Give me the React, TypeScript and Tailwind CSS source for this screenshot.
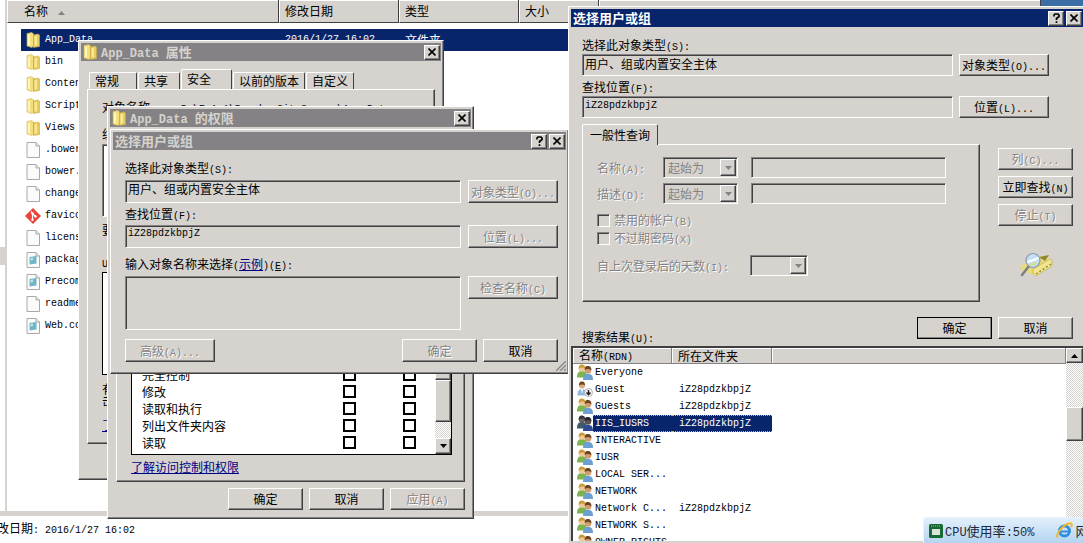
import { ReactNode } from 'react';

import { clsx } from 'clsx';

const raised =
	'bg-[#d6d3ce] border border-t-white border-l-white border-r-[#404040] border-b-[#404040] shadow-[inset_-1px_-1px_0_#848284]';
const sunken =
	'bg-[#d6d3ce] border border-t-[#848284] border-l-[#848284] border-r-white border-b-white shadow-[inset_1px_1px_0_#404040]';
const mono = "font-['Liberation_Mono','Noto_Sans_CJK_SC',monospace]";
const disabledText = 'text-[#848284] [text-shadow:1px_1px_0_#fff]';

// Latin runs are half as wide as the Chinese characters, so they get the mono face
function T({ children, large }: { children: string; large?: boolean }) {
	return (
		<>
			{children.split(/([\x20-\x7e]+)/).map((part, index) =>
				index % 2 ? (
					<span key={index} className={clsx(mono, 'whitespace-pre', large ? 'text-xs/none' : 'text-[10px]/none')}>
						{part}
					</span>
				) : (
					part
				)
			)}
		</>
	);
}

function FolderIcon() {
	return (
		<svg width="14" height="16" viewBox="0 0 14 16" className="shrink-0">
			<path d="M1 1.500 6 .5 7.500 2v12L6 15.500 1 14Z" fill="#f3df7e" stroke="#d9bd55" strokeWidth=".6" />
			<path d="M2 3 4 2.500v11L2 13Z" fill="#fdf6bd" />
			<path d="M7.500 3 12 2l1.500 1v11.500L7.500 15.500Z" fill="#e8cb60" stroke="#cba944" strokeWidth=".6" />
			<path d="M8.500 4.500 11 3.500V13l-2.500 1Z" fill="#f8e795" />
			<path d="M7 2h.8v13H7Z" fill="#d0ac48" />
		</svg>
	);
}

function PageIcon({ config }: { config?: boolean }) {
	return (
		<svg width="14" height="16" viewBox="0 0 14 16" className="shrink-0">
			<path d="M1 .5h9L13.500 4v11.500H1Z" fill="#fbfbfb" stroke="#a9a9a9" />
			<path d="M10 .5V4h3.500" fill="#e6e6e6" stroke="#a9a9a9" />
			{config && (
				<>
					<path d="M3.500 5 10.500 4v7.500l-7 1Z" fill="#6fb6c6" />
					<path d="M4.500 6 7 5.500V8l-2.500.5Z" fill="#c0e4ea" />
				</>
			)}
		</svg>
	);
}

function GitIcon() {
	return (
		<svg width="16" height="16" viewBox="0 0 16 16" className="-mr-px -ml-px shrink-0">
			<path d="m8 0 8 8-8 8-8-8Z" fill="#e8443a" />
			<path d="M6 3.500 7.500 5v7M7.500 5.500 10.500 8.500" stroke="#fff" strokeWidth="1.200" fill="none" />
			<circle cx="7.500" cy="5.500" r="1.200" fill="#fff" />
			<circle cx="10.500" cy="8.500" r="1.200" fill="#fff" />
			<circle cx="7.500" cy="11.700" r="1.200" fill="#fff" />
		</svg>
	);
}

function GroupIcon({ selected }: { selected?: boolean }) {
	return (
		<svg width="16" height="16" viewBox="0 0 16 16" className="shrink-0">
			<path d="M0 13.500C0 9 1.500 7 5 7s5 2 5 6.500Z" fill={selected ? '#3c5a6b' : '#7cb450'} />
			<circle cx="5" cy="4.500" r="3.200" fill={selected ? '#66605f' : '#f0c894'} />
			<path d="M1.500 5C1.500 1 3.500 0 5.500.5 8 1 8.500 3 8.500 4.500 6.500 3 4 3 1.500 5Z" fill={selected ? '#34343f' : '#c89b3c'} />
			<path d="M6 16c0-4.500 1.500-6 5-6s5 1.500 5 6Z" fill={selected ? '#2c4a94' : '#6c9fd2'} />
			<circle cx="11" cy="6.500" r="3.200" fill={selected ? '#5b514e' : '#d09c70'} />
			<path d="M7.700 6c0-3.500 1.500-4 3.300-4s3.500 1 3.500 4.500c-2-1.500-4.500-2-6.800-.5Z" fill={selected ? '#24242f' : '#6b4423'} />
		</svg>
	);
}

function GuestIcon() {
	return (
		<svg width="16" height="16" viewBox="0 0 16 16" className="shrink-0">
			<path d="M.5 14.500C.5 10 2 8 5 8s4.500 2 4.500 6.500Z" fill="#8fb9dc" />
			<path d="m4 8 1 5 1-5Z" fill="#fff" />
			<circle cx="5" cy="4.500" r="3" fill="#dcae7c" />
			<path d="M2 4.500C2 1 3.500.5 5 .5S8 1 8 4.500C6.500 3 4 3 2 4.500Z" fill="#6b4a22" />
			<circle cx="11.500" cy="11.500" r="4" fill="#f4f4f4" stroke="#a5a5a5" strokeWidth=".8" />
			<path d="M11.500 9v4.500M9.500 11.500l2 2.300 2-2.300" stroke="#222" strokeWidth="1.400" fill="none" />
		</svg>
	);
}

function SearchPicture() {
	return (
		<svg width="34" height="26" viewBox="0 0 34 26">
			<path d="M1 14 22 4l8 1-12 18L4 20Z" fill="#e9db7c" />
			<path d="M14 17 31 7l2 1v6L17 24l-3-2Z" fill="#f1e58f" stroke="#b8a63e" strokeWidth=".6" />
			<path d="m17 22 15-10" stroke="#9b8a2c" strokeWidth="1.500" strokeDasharray="2 2" />
			<path d="m20 5 10-2-4 6Z" fill="#8f8630" />
			<path d="M10 14 3 23" stroke="#77808a" strokeWidth="2.500" strokeLinecap="round" />
			<circle cx="14" cy="8.500" r="7" fill="#c3e0f6" stroke="#8b9aa8" strokeWidth="1.200" />
			<path d="M8.500 10.500C12 7.500 16 9 19.500 5.500" stroke="#fff" strokeWidth="2" fill="none" />
			<path d="M10 13c3-3 6-2 9-3-1 3-5 5-9 3Z" fill="#cfe08f" />
		</svg>
	);
}

function CaptionButton({ kind }: { kind: 'close' | 'help' }) {
	return (
		<button aria-label={kind} className={clsx(raised, 'flex h-[15px] w-4 items-center justify-center')}>
			{kind === 'close' ? (
				<svg width="8" height="8" viewBox="0 0 8 8" stroke="#000" strokeWidth="1.600">
					<path d="m.5.5 7 7M7.500.5l-7 7" />
				</svg>
			) : (
				<svg width="7" height="10" viewBox="0 0 7 10" stroke="#000" strokeWidth="1.700" fill="none">
					<path d="M1 3.500V2l1-1h3l1 1v1.500L3.500 5.500V7M3.500 8.200V10" />
				</svg>
			)}
		</button>
	);
}

type TitleBarProps = {
	title: string;
	active?: boolean;
	icon?: boolean;
	help?: boolean;
};

function TitleBar({ title, active, icon, help }: TitleBarProps) {
	return (
		<header
			className={clsx(
				'flex h-[18px] shrink-0 items-center pr-px pl-[2px] text-[13px] leading-4 font-bold',
				active ? 'bg-[#08246b] text-white' : 'bg-[#848284] text-[#d6d3ce]'
			)}
		>
			{icon && (
				<span className="mr-1">
					<FolderIcon />
				</span>
			)}
			<h2 className="flex-1 whitespace-nowrap">
				<T large>{title}</T>
			</h2>
			<div className="flex gap-[2px]">
				{help && <CaptionButton kind="help" />}
				<CaptionButton kind="close" />
			</div>
		</header>
	);
}

type ButtonProps = {
	children: string;
	disabled?: boolean;
	primary?: boolean;
	className?: string;
};

function Button({ children, disabled, primary, className = 'h-[22px] w-[75px]' }: ButtonProps) {
	return (
		<button
			disabled={disabled}
			className={clsx(
				raised,
				className,
				'shrink-0 leading-4 whitespace-nowrap',
				disabled && disabledText,
				primary && 'outline-1 -outline-offset-1 outline-black'
			)}
		>
			<T>{children}</T>
		</button>
	);
}

function Arrow({ up, muted }: { up?: boolean; muted?: boolean }) {
	return (
		<svg width="7" height="4" viewBox="0 0 7 4" fill={muted ? '#848284' : '#000'}>
			<path d={up ? 'M0 4h7L3.500 0Z' : 'M0 0h7L3.500 4Z'} />
		</svg>
	);
}

function Select({ id, value, className }: { id: string; value: string; className: string }) {
	return (
		<div className={clsx('relative', className)}>
			<select
				id={id}
				disabled
				className={clsx(sunken, 'block h-[21px] w-full appearance-none pl-1 leading-4 text-[#848284] opacity-100')}
			>
				<option>{value}</option>
			</select>
			<span className={clsx(raised, 'pointer-events-none absolute top-[2px] right-[2px] flex h-[17px] w-4 items-center justify-center')}>
				<Arrow muted />
			</span>
		</div>
	);
}

function Tab({ children, active }: { children: string; active?: boolean }) {
	return (
		<button
			role="tab"
			aria-selected={!!active}
			className={clsx(
				'rounded-t-[2px] border border-b-0 border-t-white border-l-white border-r-[#404040] bg-[#d6d3ce] pl-[5px] whitespace-nowrap',
				active ? 'h-5 pr-5 pb-[2px]' : 'h-[17px] pr-[5px]'
			)}
		>
			{children}
		</button>
	);
}

function Checker({ className }: { className?: string }) {
	return (
		<div className={clsx('bg-[#eae8e5] bg-[repeating-conic-gradient(#d6d3ce_0_25%,#fff_0_50%)] bg-[length:2px_2px]', className)} />
	);
}

const files = [
	{ name: 'App_Data', icon: <FolderIcon /> },
	{ name: 'bin', icon: <FolderIcon /> },
	{ name: 'Content', icon: <FolderIcon /> },
	{ name: 'Scripts', icon: <FolderIcon /> },
	{ name: 'Views', icon: <FolderIcon /> },
	{ name: '.bowerrc', icon: <PageIcon /> },
	{ name: 'bower.json', icon: <PageIcon /> },
	{ name: 'changelog.md', icon: <PageIcon /> },
	{ name: 'favicon.ico', icon: <GitIcon /> },
	{ name: 'license.txt', icon: <PageIcon /> },
	{ name: 'packages.config', icon: <PageIcon config /> },
	{ name: 'PrecompiledApp.config', icon: <PageIcon config /> },
	{ name: 'readme.md', icon: <PageIcon /> },
	{ name: 'Web.config', icon: <PageIcon config /> },
];

function Explorer() {
	const th = 'border-r border-r-[#404040] border-b border-b-[#404040] border-l border-l-white py-0 pr-0 text-left font-normal';

	return (
		<main className="mr-[42px] flex h-full flex-col bg-white">
			<div className="flex min-h-0 flex-1">
				<div className="flex w-[7px] shrink-0 items-center border-r-2 border-[#d6d3ce]">
					<div className="h-[18px] w-full bg-[#d6d3ce]" />
				</div>
				<div className="min-w-0 flex-1 overflow-hidden">
					<table className="w-full table-fixed border-separate border-spacing-0">
						<thead>
							<tr className="h-[23px] bg-[#d6d3ce] shadow-[inset_0_1px_0_#fff]">
								<th className={clsx(th, 'w-[272px] pl-4')}>
									名称
									<svg width="7" height="4" viewBox="0 0 7 4" className="ml-[10px] inline align-middle" fill="#848284">
										<path d="M0 4h7L3.500 0Z" />
									</svg>
								</th>
								<th className={clsx(th, 'w-[120px] pl-[5px]')}>修改日期</th>
								<th className={clsx(th, 'w-[120px] pl-[5px]')}>类型</th>
								<th className={clsx(th, 'w-[80px] pl-[5px]')}>大小</th>
								<th className={th} />
							</tr>
						</thead>
						<tbody className="before:block before:h-[6px]">
							{files.map(({ name, icon }, index) => {
								const row = clsx('flex h-[22px] items-center whitespace-nowrap', index === 0 && 'bg-[#08246b] text-white');
								return (
									<tr key={name}>
										<td className="p-0 pl-[14px]">
											<div className={clsx(row, 'gap-[5px] pl-[5px]')}>
												{icon}
												<T>{name}</T>
											</div>
										</td>
										<td className="p-0">
											<div className={clsx(row, 'pl-[6px]')}>
												<T>2016/1/27 16:02</T>
											</div>
										</td>
										<td className="p-0">
											<div className={clsx(row, 'pl-[6px]')}>{index < 5 ? '文件夹' : '文件'}</div>
										</td>
										<td className="p-0">
											<div className={row} />
										</td>
									</tr>
								);
							})}
						</tbody>
					</table>
				</div>
			</div>
			<div className="h-[5px] shrink-0 bg-[#d6d3ce]" />
			<footer className="-ml-[3px] flex h-[27px] shrink-0 items-center pb-1">
				<p className="whitespace-nowrap">
					<T>改日期: 2016/1/27 16:02</T>
				</p>
			</footer>
		</main>
	);
}

function PropertiesWindow() {
	return (
		<section className={clsx(raised, 'absolute top-10 left-[78px] flex h-[440px] w-[366px] flex-col p-[2px]')}>
			<TitleBar title="App_Data 属性" icon />
			<div className="flex flex-1 flex-col px-[6px] pt-2 pb-[33px]">
				<div role="tablist" className="flex items-end gap-px pl-[2px]">
					<Tab>常规&emsp;</Tab>
					<Tab>共享&ensp;</Tab>
					<Tab active>安全</Tab>
					<Tab>以前的版本</Tab>
					<Tab>自定义</Tab>
				</div>
				<div className={clsx(raised, 'flex-1 overflow-hidden pt-[9px] pr-4 pl-[14px]')}>
					<p className="flex gap-[25px] whitespace-nowrap">
						<span>
							<T>对象名称:</T>
						</span>
						<span>
							<T>{'D:\\E.1.1\\Bonobo.Git.Server\\App_Data'}</T>
						</span>
					</p>
					<p className="mt-[11px]">
						<T>组或用户名(G):</T>
					</p>
					<div className={clsx(sunken, 'mt-[2px] h-[73px] bg-white')} />
					<p className="mt-[5px]">要更改权限，请单击“编辑”。</p>
					<p className="mt-4">
						<T>Users 的权限(P)</T>
					</p>
					<div className="mt-[2px] h-[103px] border border-black bg-white" />
					<p className="mt-2 w-[200px] leading-3">有关特殊权限或高级设置，请单击“高级”继续查看。</p>
					<a href="#" className="mt-[10px] block text-[#000084] underline">
						了解访问控制和权限
					</a>
				</div>
			</div>
		</section>
	);
}

const permissions = ['完全控制', '修改', '读取和执行', '列出文件夹内容', '读取'];

function PermissionsWindow() {
	return (
		<section className={clsx(raised, 'absolute top-[106px] left-[107px] flex h-[413px] w-[367px] flex-col p-[2px]')}>
			<TitleBar title="App_Data 的权限" icon />
			<div className="flex flex-1 flex-col px-[6px] pt-2">
				<div className={clsx(raised, 'flex flex-1 flex-col justify-end px-[14px] pb-[6px]')}>
					<div className="flex w-[321px] items-start border border-black bg-white">
						<table className="mb-[3px] flex-1">
							<tbody>
								{permissions.map((permission) => (
									<tr key={permission} className="h-[17px]">
										<td className="p-0 pl-[10px] leading-4">{permission}</td>
										<td className="w-[60px] p-0">
											<input
												type="checkbox"
												aria-label={`${permission} 允许`}
												className="block size-[13px] appearance-none border-2 border-black bg-white"
											/>
										</td>
										<td className="w-8 p-0">
											<input
												type="checkbox"
												aria-label={`${permission} 拒绝`}
												className="block size-[13px] appearance-none border-2 border-black bg-white"
											/>
										</td>
									</tr>
								))}
							</tbody>
						</table>
						<div className="flex w-4 flex-col self-stretch">
							<div className={clsx(raised, 'h-[14px]')} />
							<div className={clsx(raised, 'h-[42px]')} />
							<Checker className="flex-1" />
							<button aria-label="向下" className={clsx(raised, 'flex h-4 items-center justify-center')}>
								<Arrow />
							</button>
						</div>
					</div>
					<a href="#" className="mt-1 text-[#000084] underline">
						了解访问控制和权限
					</a>
				</div>
				<div className="flex justify-end gap-[6px] pt-[6px] pb-[6px]">
					<Button>确定</Button>
					<Button>取消</Button>
					<Button disabled>应用(A)</Button>
				</div>
			</div>
		</section>
	);
}

function SelectUserWindow() {
	const side = 'h-[23px] w-[90px]';
	const field = clsx(sunken, 'h-[23px] min-w-0 flex-1 pb-[6px] pl-[2px] leading-4');

	return (
		<section className={clsx(raised, 'absolute top-[129px] left-[110px] w-[459px] p-[2px]')}>
			<TitleBar title="选择用户或组" help />
			<form className="pt-[10px] pr-2 pb-[9px] pl-3">
				<label htmlFor="object-type" className="block">
					<T>选择此对象类型(S):</T>
				</label>
				<div className="mt-1 flex gap-[7px]">
					<input id="object-type" readOnly value="用户、组或内置安全主体" className={field} />
					<Button disabled className={side}>对象类型(O)...</Button>
				</div>
				<label htmlFor="location" className="mt-[3px] block">
					<T>查找位置(F):</T>
				</label>
				<div className="mt-[3px] flex gap-[7px]">
					<input id="location" readOnly value="iZ28pdzkbpjZ" className={clsx(field, mono, 'text-[10px]')} />
					<Button disabled className={side}>位置(L)...</Button>
				</div>
				<div className="mt-2">
					<label htmlFor="names">
						<T>输入对象名称来选择</T>
					</label>
					<T>(</T>
					<a href="#" className="text-[#000084] underline">
						示例
					</a>
					<T>)(</T>
					<u className={clsx(mono, 'text-[10px]/none')}>E</u>
					<T>):</T>
				</div>
				<div className="mt-1 flex items-start gap-[7px]">
					<textarea id="names" className={clsx(sunken, 'h-[54px] min-w-0 flex-1 resize-none')} />
					<Button disabled className={side}>检查名称(C)</Button>
				</div>
				<div className="mt-[9px] flex gap-[6px]">
					<Button disabled className="mr-auto h-[23px] w-[90px]">高级(A)...</Button>
					<Button disabled className="h-[23px] w-[75px]">确定</Button>
					<Button className="h-[23px] w-[75px]">取消</Button>
				</div>
			</form>
			<svg width="10" height="10" viewBox="0 0 10 10" className="absolute right-[2px] bottom-[2px]" stroke="#848284" strokeWidth="1.300">
				<path d="m0 10 10-10M4 10l6-6M8 10l2-2" />
			</svg>
		</section>
	);
}

const results = [
	{ name: 'Everyone', folder: '' },
	{ name: 'Guest', folder: 'iZ28pdzkbpjZ' },
	{ name: 'Guests', folder: 'iZ28pdzkbpjZ' },
	{ name: 'IIS_IUSRS', folder: 'iZ28pdzkbpjZ' },
	{ name: 'INTERACTIVE', folder: '' },
	{ name: 'IUSR', folder: '' },
	{ name: 'LOCAL SER...', folder: '' },
	{ name: 'NETWORK', folder: '' },
	{ name: 'Network C...', folder: 'iZ28pdzkbpjZ' },
	{ name: 'NETWORK S...', folder: '' },
	{ name: 'OWNER RIGHTS', folder: '' },
];

function Results() {
	const th = 'h-[15px] border-r border-b border-[#848284] p-0 pl-[6px] text-left leading-[13px] font-normal shadow-[inset_1px_1px_0_#fff]';

	return (
		<div className="mt-px mb-[2px] flex min-h-0 flex-1 border-t-2 border-l-2 border-[#404040] bg-white">
			<div className="min-w-0 flex-1 overflow-hidden">
				<table className="w-full table-fixed border-separate border-spacing-0">
					<thead>
						<tr className="bg-[#d6d3ce]">
							<th className={clsx(th, 'w-[99px]')}>
								<T>名称(RDN)</T>
							</th>
							<th className={clsx(th, 'w-[100px]')}>所在文件夹</th>
							<th className={th} />
						</tr>
					</thead>
					<tbody>
						{results.map(({ name, folder }) => {
							const selected = name === 'IIS_IUSRS';
							const cell = clsx(
								'block h-[17px] whitespace-nowrap',
								selected ? 'border-y border-dotted border-[#d6b45a] bg-[#08246b] leading-[10px] text-white' : 'leading-3'
							);
							return (
								<tr key={name} className="h-[17px]">
									<td className="p-0 pl-1">
										<div className="flex">
											{name === 'Guest' ? <GuestIcon /> : <GroupIcon selected={selected} />}
											<span className={clsx(cell, 'flex-1 pl-[2px]')}>
												<T>{name}</T>
											</span>
										</div>
									</td>
									<td className="p-0">
										<span className={clsx(cell, 'pl-[7px]')}>
											<T>{folder}</T>
										</span>
									</td>
									<td />
								</tr>
							);
						})}
					</tbody>
				</table>
			</div>
			<div className="flex w-[17px] shrink-0 flex-col">
				<button aria-label="向上" className={clsx(raised, 'flex h-[15px] items-center justify-center')}>
					<Arrow up />
				</button>
				<Checker className="h-11" />
				<div className={clsx(raised, 'h-[34px]')} />
				<Checker className="flex-1" />
			</div>
		</div>
	);
}

function SearchWindow() {
	const side = 'h-[22px] w-[90px]';
	const check = clsx(sunken, 'size-[13px] appearance-none');
	const field = clsx(sunken, 'h-[22px] min-w-0 flex-1 pb-1 pl-[2px] leading-4');

	return (
		<section className="absolute top-[6px] right-0 bottom-0 left-[568px] flex flex-col border-t border-l border-white bg-[#d6d3ce] pt-[2px] pl-[2px]">
			<TitleBar title="选择用户或组" active help />
			<form className="pt-[10px] pr-[10px] pl-[11px]">
				<div className="pr-6">
					<label htmlFor="search-type" className="block">
						<T>选择此对象类型(S):</T>
					</label>
					<div className="mt-px flex gap-[6px]">
						<input id="search-type" readOnly value="用户、组或内置安全主体" className={field} />
						<Button className={side}>对象类型(O)...</Button>
					</div>
					<label htmlFor="search-location" className="mt-[3px] block">
						<T>查找位置(F):</T>
					</label>
					<div className="mt-px flex gap-[6px]">
						<input id="search-location" readOnly value="iZ28pdzkbpjZ" className={clsx(field, mono, 'text-[10px]')} />
						<Button className={side}>位置(L)...</Button>
					</div>
				</div>
				<div className="mt-[6px] flex gap-[18px]">
					<div className="flex min-w-0 flex-1 flex-col">
						<button
							type="button"
							role="tab"
							aria-selected
							className="relative -mb-px h-[21px] w-[76px] rounded-t-[2px] border border-b-0 border-t-white border-l-white border-r-[#404040] bg-[#d6d3ce] whitespace-nowrap"
						>
							一般性查询
						</button>
						<div className={clsx(raised, disabledText, 'h-[158px] pt-3 pl-[14px]')}>
							<div className="grid grid-cols-[66px_75px_208px] items-center gap-y-[5px]">
								<label htmlFor="name-mode">
									<T>名称(A):</T>
								</label>
								<Select id="name-mode" value="起始为" className="w-[75px]" />
								<input aria-label="名称" disabled className={clsx(sunken, 'ml-[13px] h-[21px]')} />
								<label htmlFor="description-mode">
									<T>描述(D):</T>
								</label>
								<Select id="description-mode" value="起始为" className="w-[75px]" />
								<input aria-label="描述" disabled className={clsx(sunken, 'ml-[13px] h-[21px]')} />
							</div>
							<label className="mt-2 flex items-center gap-1">
								<input type="checkbox" disabled className={check} />
								<span>
									<T>禁用的帐户(B)</T>
								</span>
							</label>
							<label className="mt-[2px] flex items-center gap-1">
								<input type="checkbox" disabled className={check} />
								<span>
									<T>不过期密码(X)</T>
								</span>
							</label>
							<div className="mt-[9px] flex items-center">
								<label htmlFor="days" className="w-[153px]">
									<T>自上次登录后的天数(I):</T>
								</label>
								<Select id="days" value="" className="w-[58px]" />
							</div>
						</div>
					</div>
					<div className="flex flex-col gap-[6px] pt-6">
						<Button disabled>列(C)...</Button>
						<Button>立即查找(N)</Button>
						<Button disabled>停止(T)</Button>
						<div className="mt-5 flex justify-center">
							<SearchPicture />
						</div>
					</div>
				</div>
				<div className="mt-[15px] flex h-7 items-start gap-[6px]">
					<p className="mr-auto self-end">
						<T>搜索结果(U):</T>
					</p>
					<Button primary>确定</Button>
					<Button>取消</Button>
				</div>
			</form>
			<Results />
		</section>
	);
}

function StatusItem({ icon, children }: { icon: ReactNode; children: string }) {
	return (
		<span className="flex items-center gap-[2px]">
			{icon}
			<span>
				<T large>{children}</T>
			</span>
		</span>
	);
}

function StatusPopup() {
	return (
		<aside className="absolute right-0 bottom-0 flex h-[26px] w-40 items-center gap-[22px] overflow-hidden rounded-tl border-t border-l border-[#e8f3fc] bg-linear-to-b from-[#e2effb] to-[#b5d4f1] pl-[5px] text-[13px] whitespace-nowrap text-[#1c2a3c]">
			<StatusItem
				icon={
					<svg width="14" height="14" viewBox="0 0 14 14" className="shrink-0">
						<rect width="14" height="14" rx="1.500" fill="#186a35" />
						<rect x="3" y="5" width="8" height="6" fill="#d8e6da" />
						<path d="M2 2h10" stroke="#8fc49d" strokeDasharray="1 1" />
					</svg>
				}
			>
				CPU使用率:50%
			</StatusItem>
			<StatusItem
				icon={
					<svg width="17" height="17" viewBox="0 0 17 17" className="shrink-0" fill="none">
						<circle cx="8.500" cy="9" r="5" stroke="#2f8fdc" strokeWidth="3" />
						<path d="M5 9.500h8" stroke="#2f8fdc" strokeWidth="2" />
						<path d="M1.500 15.500C-.5 12 7 2.500 13.500 1.200c3-.4 2.500 2.300 1.500 4" stroke="#edb92e" strokeWidth="2" />
					</svg>
				}
			>
				网络
			</StatusItem>
		</aside>
	);
}

export default function App() {
	return (
		<div className="relative h-screen overflow-hidden bg-[#3a6ea5] font-['Noto_Sans_CJK_SC',sans-serif] text-xs leading-4 text-black">
			<Explorer />
			<PropertiesWindow />
			<PermissionsWindow />
			<SelectUserWindow />
			<SearchWindow />
			<StatusPopup />
		</div>
	);
}
